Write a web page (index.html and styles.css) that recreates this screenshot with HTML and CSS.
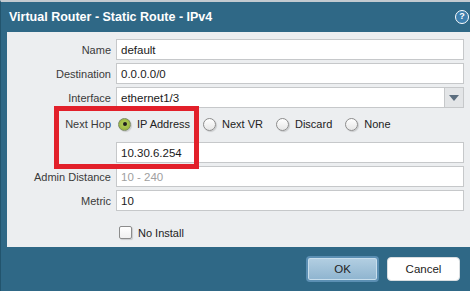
FILE: index.html
```html
<!DOCTYPE html>
<html>
<head>
<meta charset="utf-8">
<link rel="stylesheet" href="styles.css">
</head>
<body>
<div class="dialog">
  <div class="titlebar">
    <span class="title">Virtual Router - Static Route - IPv4</span>
    <span class="help">?</span>
  </div>
  <div class="middle">
    <div class="body">
      <div class="form">
        <div class="row"><span class="lbl">Name</span><div class="input">default</div></div>
        <div class="row"><span class="lbl">Destination</span><div class="input">0.0.0.0/0</div></div>
        <div class="row"><span class="lbl">Interface</span>
          <div class="select"><div class="input sel-text">ethernet1/3</div><div class="sel-btn"><span class="tri"></span></div></div>
        </div>
        <div class="row hop"><span class="lbl">Next Hop</span>
          <div class="radios">
            <span class="opt"><span class="radio on"></span>IP Address</span>
            <span class="opt"><span class="radio"></span>Next VR</span>
            <span class="opt"><span class="radio"></span>Discard</span>
            <span class="opt"><span class="radio"></span>None</span>
          </div>
        </div>
        <div class="row"><span class="lbl"></span><div class="input">10.30.6.254</div></div>
        <div class="row"><span class="lbl">Admin Distance</span><div class="input placeholder">10 - 240</div></div>
        <div class="row"><span class="lbl">Metric</span><div class="input">10</div></div>
        <div class="row check"><span class="lbl"></span><span class="opt"><span class="box"></span>No Install</span></div>
      </div>
      <div class="annot"></div>
    </div>
  </div>
  <div class="footer">
    <button class="btn ok">OK</button>
    <button class="btn cancel">Cancel</button>
  </div>
</div>
</body>
</html>
```

FILE: styles.css
```css
* { box-sizing: border-box; }
html, body { margin: 0; padding: 0; }
body {
  width: 470px;
  height: 291px;
  overflow: hidden;
  font-family: "Liberation Sans", Arial, sans-serif;
  font-size: 11px;
  background: #2f6886;
}
.dialog {
  width: 470px;
  height: 291px;
  display: flex;
  flex-direction: column;
  background: #2f6886;
  border-top: 2px solid #c3cad0;
  border-left: 1px solid #22546d;
}
.titlebar {
  height: 30px;
  display: flex;
  align-items: center;
  justify-content: space-between;
  padding: 0 1px 1px 8px;
}
.title {
  color: #ffffff;
  font-weight: bold;
  font-size: 12.5px;
}
.help {
  width: 14px;
  height: 14px;
  border-radius: 50%;
  background: #3d7fae;
  border: 1.5px solid #ffffff;
  color: #ffffff;
  font-weight: bold;
  font-size: 9px;
  line-height: 11px;
  text-align: center;
  margin-top: 1px;
}
.middle {
  padding-left: 6px;
}
.body {
  position: relative;
  height: 215px;
  background: #eceef0;
  padding: 7px 6px 0 0;
}
.form {
  display: flex;
  flex-direction: column;
  gap: 3px;
}
.row {
  display: grid;
  grid-template-columns: 104px 1fr;
  column-gap: 5px;
  height: 21px;
  align-items: center;
}
.row.hop { height: 28px; padding-bottom: 2px; }
.row.check { height: 13px; margin-top: 12px; }
.lbl {
  text-align: right;
  color: #3a3a3a;
}
.input {
  height: 21px;
  background: #ffffff;
  border: 1px solid #c6c8ca;
  padding: 0 4px;
  display: flex;
  align-items: center;
  color: #1a1a1a;
  font-size: 11.5px;
}
.input.placeholder { color: #a0a0a0; }
.select {
  display: flex;
  height: 21px;
}
.sel-text { flex: 1; border-right: none; }
.sel-btn {
  width: 20px;
  height: 21px;
  background: #e3e5e7;
  border: 1px solid #c6c8ca;
  display: flex;
  align-items: center;
  justify-content: center;
}
.tri {
  width: 0;
  height: 0;
  border-left: 5px solid transparent;
  border-right: 5px solid transparent;
  border-top: 6px solid #5b6d7e;
  margin-top: 1px;
}
.radios {
  display: flex;
  align-items: center;
  gap: 13px;
  padding-left: 2px;
}
.opt {
  display: flex;
  align-items: center;
  gap: 6px;
  color: #222;
}
.radio {
  width: 13px;
  height: 13px;
  border-radius: 50%;
  border: 1px solid #8c8c8c;
  background: linear-gradient(#ffffff, #e6e6e6);
  box-shadow: 1px 1px 1px rgba(0,0,0,0.15);
  display: flex;
  align-items: center;
  justify-content: center;
}
.radio.on {
  background: radial-gradient(circle at 50% 45%, #b7d15e, #8fae38);
  border-color: #7c8a66;
}
.radio.on::after {
  content: "";
  width: 4px;
  height: 4px;
  border-radius: 50%;
  background: #1e1e1e;
}
.check .opt { padding-left: 3px; }
.box {
  width: 13px;
  height: 13px;
  border: 1px solid #8c8c8c;
  border-radius: 2px;
  background: linear-gradient(#ffffff, #f0f0f0);
  box-shadow: 1px 1px 1px rgba(0,0,0,0.15);
}
.annot {
  position: absolute;
  left: 47px;
  top: 74px;
  width: 145px;
  height: 63px;
  border: 5px solid #e2202a;
}
.footer {
  flex: 1;
  display: flex;
  justify-content: flex-end;
  align-items: flex-start;
  gap: 8px;
  padding: 9px 10px 0 0;
}
.btn {
  width: 73px;
  font-family: "Liberation Sans", Arial, sans-serif;
  font-size: 11.5px;
  color: #222;
  border-radius: 4px;
  padding: 0;
}
.ok {
  height: 26px;
  background: linear-gradient(#b3cfe2, #8eb4cf);
  border: 2px solid #5b8fb3;
  box-shadow: inset 0 0 0 1px #c8deec;
}
.cancel {
  height: 24px;
  margin-top: 1px;
  background: #ffffff;
  border: 1px solid #d8dde0;
}
```
